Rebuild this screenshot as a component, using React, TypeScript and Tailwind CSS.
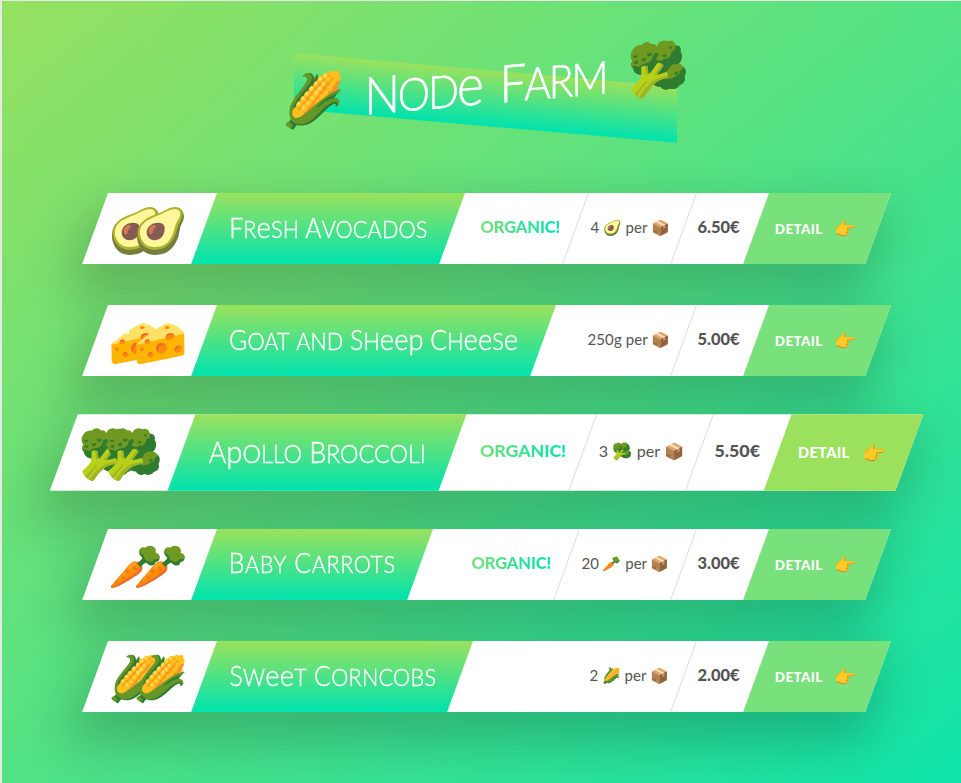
import React, { useLayoutEffect, useRef } from "react";

function Fit({ width, className = "", children }: { width: number; className?: string; children: React.ReactNode }) {
  const ref = useRef<HTMLSpanElement>(null);
  useLayoutEffect(() => {
    const el = ref.current;
    if (!el) return;
    el.style.letterSpacing = "0px";
    const n = (el.textContent || "").length;
    const gap = (width - el.offsetWidth) / n;
    el.style.letterSpacing = gap + "px";
  }, [width]);
  return (
    <span ref={ref} className={"inline-block whitespace-nowrap " + className}>
      {children}
    </span>
  );
}

function Fancy({ text }: { text: string }) {
  return (
    <>
      {text.split(/([a-z]+)/).map((part, i) =>
        /[a-z]/.test(part) ? (
          part.split(/([ep])/).map((s, j) =>
            s === "" ? null : s === "e" || s === "p" ? (
              <span key={i + "-" + j} className="text-[1.1em]">{s}</span>
            ) : (
              <span key={i + "-" + j} className="text-[0.87em] uppercase">{s}</span>
            )
          )
        ) : (
          <span key={i}>{part}</span>
        )
      )}
    </>
  );
}

function Emoji({ e, className = "" }: { e: string; className?: string }) {
  return <span className={"inline-block leading-none font-['Noto_Color_Emoji',sans-serif] " + className}>{e}</span>;
}

type Product = { name: string; icon: string; organic: boolean; unit: string; unitW: number; qtyW: number; price: string; titleW: number; textW: number; hover?: boolean };
const products: Product[] = [
  { name: "Fresh Avocados", icon: "🥑", organic: true, unit: "4 🥑 per 📦", unitW: 79, qtyW: 109, price: "6.50", titleW: 248, textW: 198 },
  { name: "Goat and Sheep Cheese", icon: "🧀", organic: false, unit: "250g per 📦", unitW: 83, qtyW: 109, price: "5.00", titleW: 339, textW: 289 },
  { name: "Apollo Broccoli", icon: "🥦", organic: true, unit: "3 🥦 per 📦", unitW: 79, qtyW: 109, price: "5.50", titleW: 251, textW: 201, hover: true },
  { name: "Baby Carrots", icon: "🥕", organic: true, unit: "20 🥕 per 📦", unitW: 88, qtyW: 118, price: "3.00", titleW: 216, textW: 167 },
  { name: "Sweet Corncobs", icon: "🌽", organic: false, unit: "2 🌽 per 📦", unitW: 79, qtyW: 109, price: "2.00", titleW: 256, textW: 207 },
];

function Card({ p }: { p: Product }) {
  return (
    <div className={"flex h-[71.4px] w-[782.6px] -skew-x-[20deg] bg-white shadow-[0_24px_48px_8px_rgba(0,0,0,0.2)] " + (p.hover ? "scale-[1.08]" : "")}>
      <div className="flex w-[109px] shrink-0 items-center justify-center pt-[5px] pr-[2px]">
        <div className="flex skew-x-[20deg] text-[44px]"><Emoji e={p.icon} /><Emoji e={p.icon} className="-ml-[30px]" /></div>
      </div>
      <div className="flex shrink-0 items-center justify-center bg-linear-to-b/srgb from-[#9be15d] to-[#00e3ae] pb-[3px]" style={{ width: p.titleW }}>
        <div className="skew-x-[20deg] font-['Lato'] text-[27px] font-light text-white [-webkit-text-stroke:0.35px_white]"><Fit width={p.textW / 0.92} className="scale-x-[0.92]"><Fancy text={p.name} /></Fit></div>
      </div>
      <div className="flex flex-1 items-center justify-end pr-[14.5px] pb-[3px]">
        {p.organic && <div className="skew-x-[20deg] font-['Lato'] text-[16.5px] font-black"><Fit width={80} className="bg-linear-to-r/srgb from-[#79e17b] to-[#00e3ae] bg-clip-text text-transparent">ORGANIC!</Fit></div>}
      </div>
      <div className={"flex shrink-0 items-center justify-center border-r border-[#ddd] pb-[2px] " + (p.organic ? "border-l" : "")} style={{ width: p.qtyW }}>
        <div className="skew-x-[20deg] font-['Lato','Noto_Color_Emoji',sans-serif] text-[15px] text-[#555]"><Fit width={p.unitW}>{p.unit}</Fit></div>
      </div>
      <div className="flex w-[72px] shrink-0 items-center justify-center pr-[3px] pb-[3px]">
        <div className="skew-x-[20deg] font-['Lato'] text-[16.5px] font-black text-[#555]"><Fit width={42}>{p.price}€</Fit></div>
      </div>
      <div className={"flex w-[122px] shrink-0 items-center justify-center " + (p.hover ? "bg-[#9be15d]" : "bg-[#79e17b]")}>
        <div className="flex skew-x-[20deg] items-center gap-3 font-['Lato'] text-[13.5px] font-black text-white"><Fit width={48}>DETAIL</Fit><Emoji e="👉" className="text-[18px]" /></div>
      </div>
    </div>
  );
}

export default function App() {
  return (
    <div className="h-[783px] w-[961px] overflow-hidden border-t border-l-2 border-[#e8e8e8] bg-linear-to-br/srgb from-[#96e160] to-[#0fe3a9]">
      <header className="mt-[69px] ml-[292px] flex h-[56px] w-[383px] skew-y-[5deg] items-center justify-center bg-linear-to-b/srgb from-[#9be15d] to-[#00e3ae] pb-[25px]">
        <h1 className="flex -skew-y-[10deg] items-center gap-[7px] font-['Lato'] text-[52px] font-light text-white [-webkit-text-stroke:0.6px_white]">
          <Emoji e="🌽" className="text-[50px]" /><Fit width={269} className="-mt-[5px] scale-x-[0.9] [word-spacing:8px]"><Fancy text="Node Farm" /></Fit><Emoji e="🥦" className="text-[50px]" />
        </h1>
      </header>
      <main className="mt-[67px] ml-[92.5px] flex flex-col gap-[40.6px]">
        {products.map((p) => <Card key={p.name} p={p} />)}
      </main>
    </div>
  );
}
